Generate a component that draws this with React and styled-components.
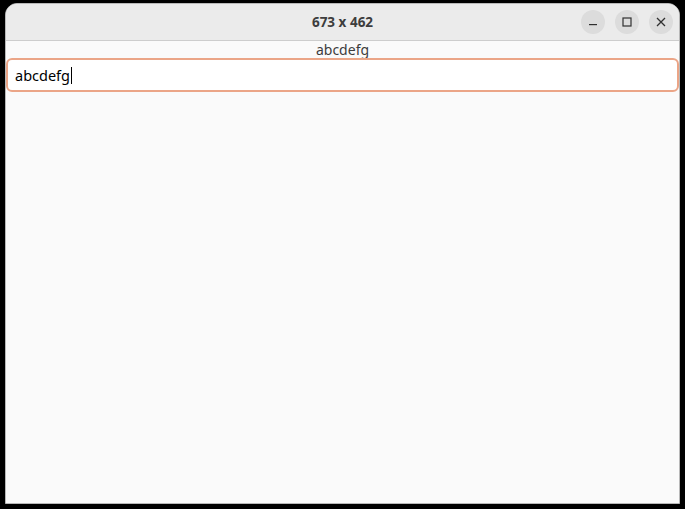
import React from "react";
import styled, { createGlobalStyle } from "styled-components";

const GlobalStyle = createGlobalStyle`
	html, body {
		margin: 0;
		padding: 0;
		background: #000;
	}
	body {
		font-family: "Noto Sans", "Open Sans", sans-serif;
	}
`;

const Screen = styled.div`
	width: 685px;
	height: 509px;
	padding: 3px 0 0 5px;
	box-sizing: border-box;
	background: #000;
`;

const Window = styled.div`
	width: 675px;
	border: 1px solid #b8b8b8;
	border-radius: 12px 12px 0 0;
	overflow: hidden;
	background: #fafafa;
	box-sizing: border-box;
`;

const TitleBar = styled.div`
	height: 36px;
	background: #ebebeb;
	border-bottom: 1px solid #cdcdcd;
	display: flex;
	align-items: center;
	justify-content: center;
	position: relative;
`;

const Title = styled.span`
	font-size: 13.5px;
	font-weight: 700;
	color: #3d3d3d;
`;

const Controls = styled.div`
	position: absolute;
	right: 6px;
	top: 6px;
	display: flex;
	gap: 10px;
`;

const WinButton = styled.button`
	width: 24px;
	height: 24px;
	border-radius: 50%;
	border: none;
	padding: 0;
	background: #dcdcdc;
	display: flex;
	align-items: center;
	justify-content: center;
	color: #303030;
`;

const Content = styled.div`
	height: 462px;
	display: flex;
	flex-direction: column;
	background: #fafafa;
`;

const Label = styled.div`
	text-align: center;
	font-size: 14px;
	line-height: 17px;
	color: #3d3d3d;
`;

const Field = styled.div`
	margin: 0;
	height: 34px;
	border: 2px solid #eba587;
	border-radius: 6px;
	background: #fff;
	box-sizing: border-box;
	display: flex;
	align-items: center;
	padding-left: 7px;
	font-size: 14.5px;
	color: #000;
`;

const Caret = styled.span`
	display: inline-block;
	width: 1px;
	height: 17px;
	background: #000;
	margin-left: 1px;
`;

const Minimize = () => (
	<svg width="10" height="10" viewBox="0 0 10 10">
		<rect x="1" y="7" width="8" height="1.2" fill="currentColor" />
	</svg>
);

const Maximize = () => (
	<svg width="10" height="10" viewBox="0 0 10 10">
		<rect x="1" y="1" width="8" height="8" fill="none" stroke="currentColor" strokeWidth="1.2" />
	</svg>
);

const Close = () => (
	<svg width="10" height="10" viewBox="0 0 10 10">
		<path d="M1 1 L9 9 M9 1 L1 9" stroke="currentColor" strokeWidth="1.3" />
	</svg>
);

export default function App() {
	return (
		<>
			<GlobalStyle />
			<Screen>
				<Window>
					<TitleBar>
						<Title>673 x 462</Title>
						<Controls>
							<WinButton><Minimize /></WinButton>
							<WinButton><Maximize /></WinButton>
							<WinButton><Close /></WinButton>
						</Controls>
					</TitleBar>
					<Content>
						<Label>abcdefg</Label>
						<Field>
							abcdefg<Caret />
						</Field>
					</Content>
				</Window>
			</Screen>
		</>
	);
}
